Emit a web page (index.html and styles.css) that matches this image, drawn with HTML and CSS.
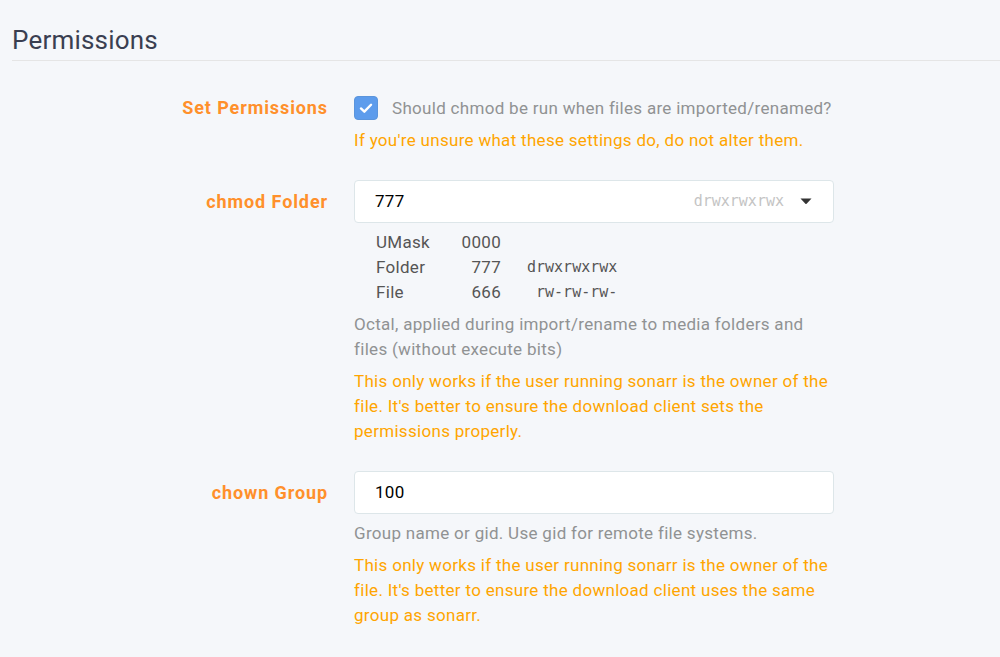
FILE: index.html
```html
<!DOCTYPE html>
<html lang="en">
<head>
    <meta charset="UTF-8">
    <meta name="viewport" content="width=device-width, initial-scale=1.0">
    <title>Permissions</title>
    <link rel="stylesheet" href="styles.css">
</head>
<body>
    <div class="page">
        <div class="section">
            <div class="section-title">Permissions</div>

            <div class="section-body">
                <div class="form-group">
                    <label class="form-label form-label-check">Set Permissions</label>
                    <div class="form-field">
                        <label class="check-row">
                            <span class="checkbox">
                                <svg viewBox="0 0 24 24" class="check-icon">
                                    <path d="M6.5 12.5L10.2 16L17.5 8.5"></path>
                                </svg>
                            </span>
                            <span class="check-text">Should chmod be run when files are imported/renamed?</span>
                        </label>
                        <div class="help-warning help-tight">If you're unsure what these settings do, do not alter them.</div>
                    </div>
                </div>

                <div class="form-group">
                    <label class="form-label">chmod Folder</label>
                    <div class="form-field">
                        <div class="text-input select-input">
                            <span class="input-value">777</span>
                            <span class="input-hint">drwxrwxrwx</span>
                            <svg class="caret" viewBox="0 0 12 7">
                                <path d="M0.5 0.5H11.5L6.6 5.8Q6 6.4 5.4 5.8Z"></path>
                            </svg>
                        </div>
                        <div class="umask">
                            <span>UMask</span><span class="umask-num">0000</span><span class="umask-mono"></span>
                            <span>Folder</span><span class="umask-num">777</span><span class="umask-mono">drwxrwxrwx</span>
                            <span>File</span><span class="umask-num">666</span><span class="umask-mono"> rw-rw-rw-</span>
                        </div>
                        <div class="help-text">Octal, applied during import/rename to media folders and files (without execute bits)</div>
                        <div class="help-warning">This only works if the user running sonarr is the owner of the file. It's better to ensure the download client sets the permissions properly.</div>
                    </div>
                </div>

                <div class="form-group">
                    <label class="form-label">chown Group</label>
                    <div class="form-field">
                        <div class="text-input">
                            <span class="input-value">100</span>
                        </div>
                        <div class="help-text">Group name or gid. Use gid for remote file systems.</div>
                        <div class="help-warning">This only works if the user running sonarr is the owner of the file. It's better to ensure the download client uses the same group as sonarr.</div>
                    </div>
                </div>
            </div>
        </div>
    </div>
</body>
</html>
```

FILE: styles.css
```css
body {
    margin: 0;
    background-color: #f5f7fa; /* page background */
    font-family: Roboto, 'Liberation Sans', Arial, sans-serif;
    font-size: 17px;
    letter-spacing: 0.3px;
    color: #3a3f51;
}
.page {
    padding: 25px 0 0 12px;
}
.section-title {
    font-size: 26px;
    line-height: 30px;
    letter-spacing: 0.2px;
    padding-bottom: 5px;
    border-bottom: 1px solid #e5e5e5;
    color: #3a3f51;
}
.section-body {
    padding-top: 27px;
}
.form-group {
    display: flex;
    margin-bottom: 27px;
}
.form-label {
    flex: 0 0 316px;
    margin-right: 26px;
    text-align: right;
    font-size: 18px;
    font-weight: bold;
    letter-spacing: 0.9px;
    color: #ff902b; /* advanced setting label */
    height: 43px;
    line-height: 43px;
}
.form-label-check {
    height: 40px;
    line-height: 40px;
}
.form-field {
    width: 480px;
    line-height: 25px;
}
.check-row {
    display: flex;
    align-items: center;
    height: 40px;
}
.checkbox {
    width: 24px;
    height: 24px;
    box-sizing: border-box;
    border-radius: 4px;
    background-color: #5d9cec;
    border: 1px solid #5b95dc;
    margin-right: 14px;
    display: flex;
}
.check-icon {
    width: 22px;
    height: 22px;
    fill: none;
    stroke: white;
    stroke-width: 2.6;
    stroke-linecap: round;
    stroke-linejoin: round;
}
.check-text {
    color: #909293;
}
.text-input {
    height: 43px;
    box-sizing: border-box;
    background-color: #fff;
    border: 1px solid #dde6e9;
    border-radius: 4px;
    padding: 0 20px;
    display: flex;
    align-items: center;
    color: #000;
}
.input-value {
    flex: 1;
}
.input-hint {
    font-family: 'DejaVu Sans Mono', 'Liberation Mono', monospace;
    font-size: 15px;
    letter-spacing: 0;
    color: #c4c4c4;
    margin-right: 16px;
}
.caret {
    width: 12px;
    height: 7px;
    fill: #333;
    margin-right: 1px;
}
.umask {
    display: grid;
    grid-template-columns: 80px 45px auto;
    margin: 7px 0 0 22px;
    color: #555;
}
.umask-num {
    text-align: right;
}
.umask-mono {
    font-family: 'DejaVu Sans Mono', 'Liberation Mono', monospace;
    font-size: 15px;
    letter-spacing: 0;
    padding-left: 26px;
    white-space: pre;
}
.help-text {
    margin-top: 7px;
    color: #909293;
}
.help-warning {
    margin-top: 7px;
    color: #ffa500;
}
.help-warning.help-tight {
    margin-top: 0;
}
```
